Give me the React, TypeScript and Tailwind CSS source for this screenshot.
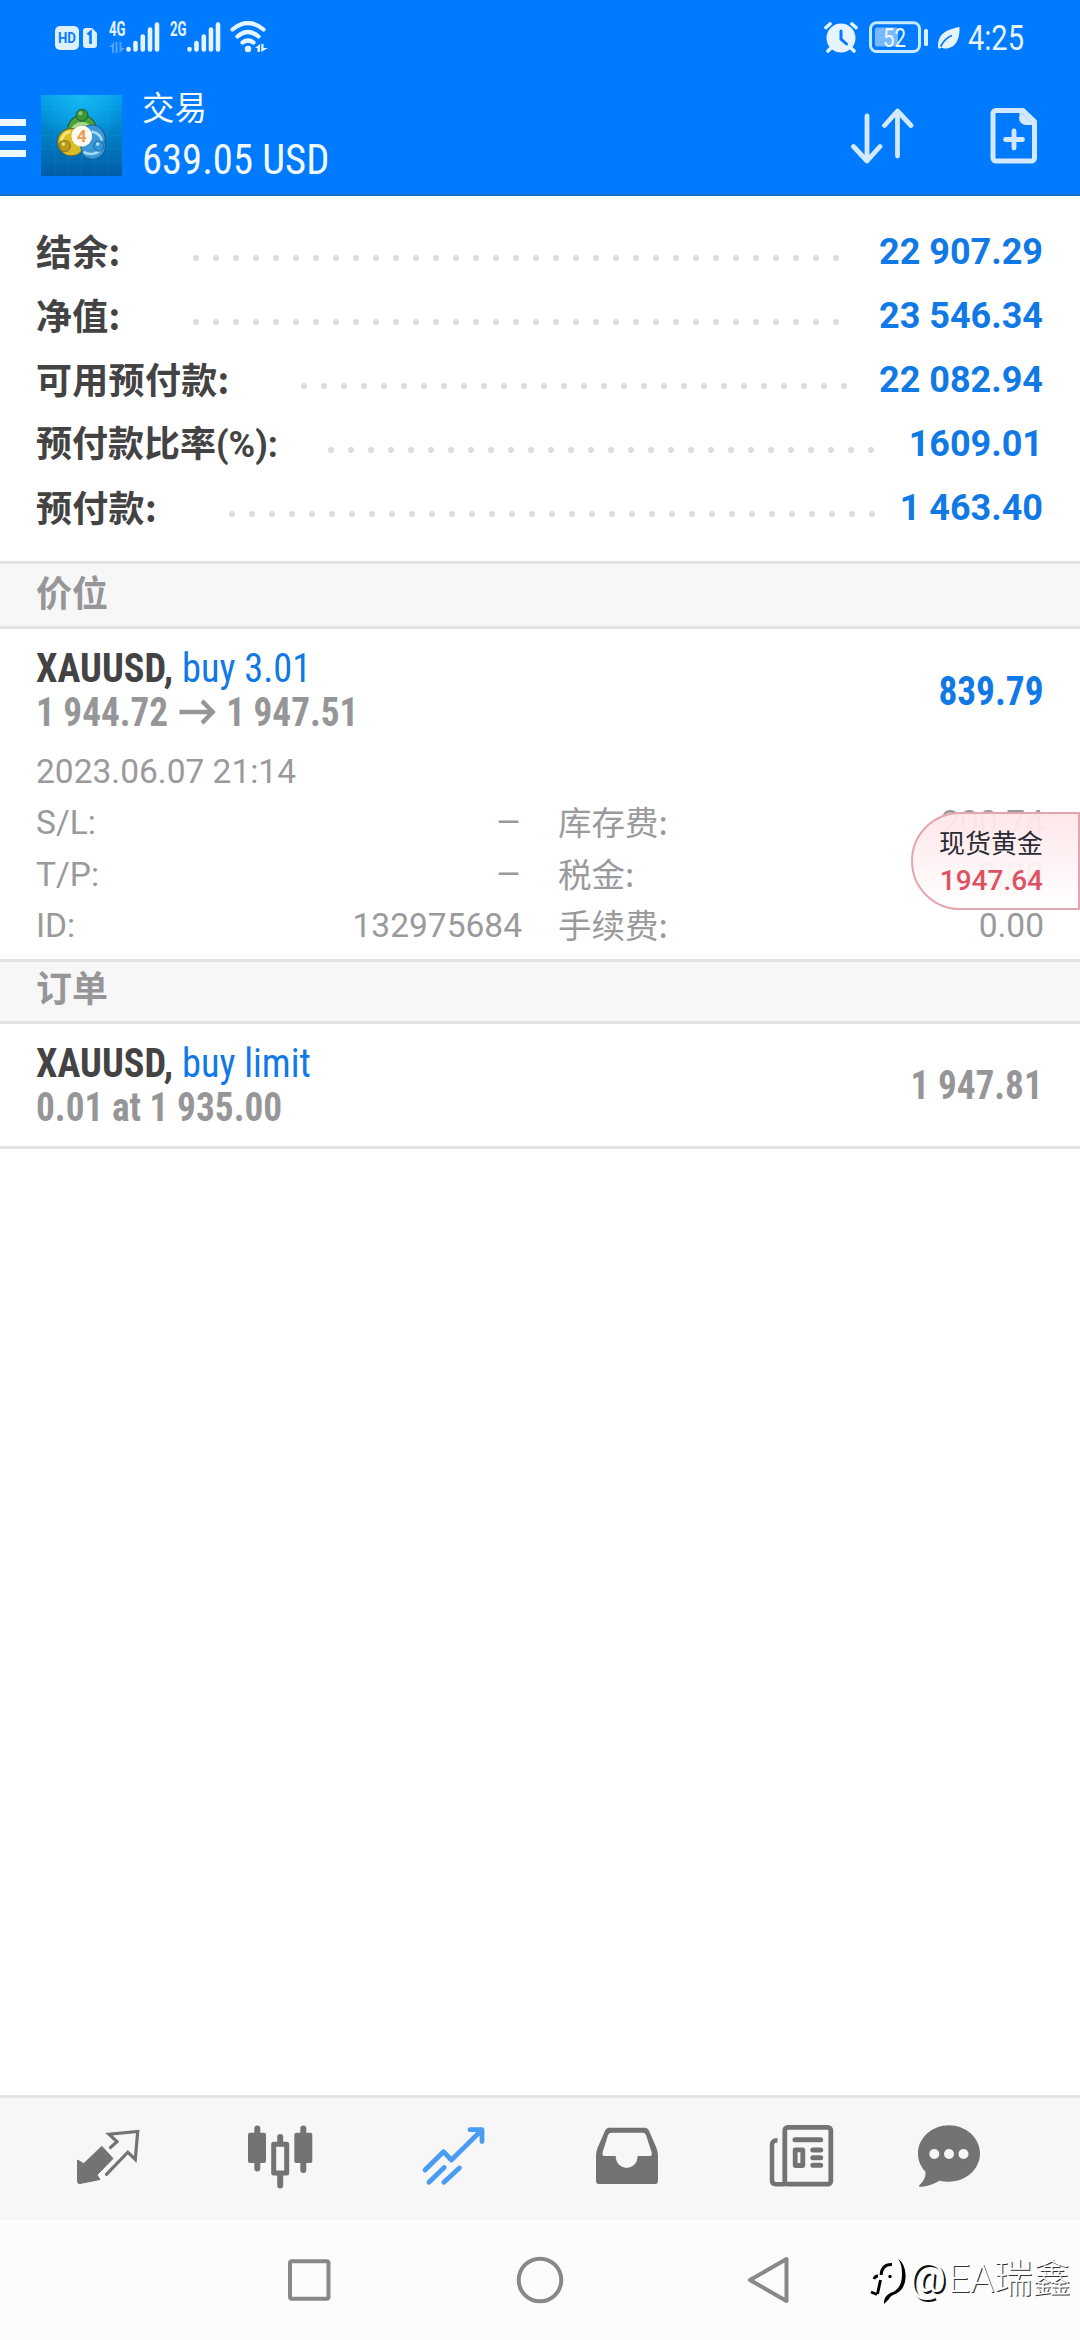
import { ReactNode } from "react";

const summaryRows = [
  { label: "结余:", value: "22 907.29", dotsClass: "w-[660px]", valueClass: "w-[197px]" },
  { label: "净值:", value: "23 546.34", dotsClass: "w-[660px]", valueClass: "w-[197px]" },
  { label: "可用预付款:", value: "22 082.94", dotsClass: "w-[560px]", valueClass: "w-[189px]" },
  { label: "预付款比率(%):", value: "1609.01", dotsClass: "w-[560px]", valueClass: "w-[162px]", latin: true },
  { label: "预付款:", value: "1 463.40", dotsClass: "w-[660px]", valueClass: "w-[161px]" },
];

const detailRows = [
  { left: "S/L:", leftValue: "–", right: "库存费:", rightValue: "-200.74" },
  { left: "T/P:", leftValue: "–", right: "税金:", rightValue: "0.00" },
  { left: "ID:", leftValue: "132975684", right: "手续费:", rightValue: "0.00" },
];

const SignalBars = () => (
  <svg className="w-[34px] h-[32px]" viewBox="0 0 34 32" stroke="#e6f4ff" strokeWidth="4.6" strokeLinecap="round">
    <path d="M2.5 28v.5M9.5 22v6.5M16.8 15.5v13M24 8.5v20M31 3.5v25" />
  </svg>
);

const StatusBar = () => (
  <div className="h-[76px] flex items-start pt-[21px] pl-[55px] pr-[57px] text-[#e6f4ff]">
    <div className="mt-[5px] w-[24px] h-[24px] rounded-[5px] bg-[#dcf0ff] text-[#0a7cff] text-[15px] leading-[25px] font-bold">
      <div className="w-[24px] text-center scale-x-[0.88]">HD</div>
    </div>
    <svg className="mt-[7px] ml-[4px] w-[14px] h-[20px]" viewBox="0 0 14 20">
      <path d="M3 0h6l5 5v12a3 3 0 0 1-3 3H3a3 3 0 0 1-3-3V3a3 3 0 0 1 3-3z" fill="#dcf0ff" />
      <path d="M4.5 6.500 7.500 4v12" fill="none" stroke="#0a7cff" strokeWidth="2.600" />
    </svg>
    <div className="ml-[12px] w-[17px] h-[32px]">
      <div className="w-[21px] text-[20px] leading-[16px] font-bold origin-left scale-x-[0.66]">4G</div>
      <svg className="mt-[5px] w-[16px] h-[11px] opacity-35" viewBox="0 0 16 11" fill="#e6f4ff">
        <path d="M5 0v11H3V5H0zM6.500 0h2v11h-2zM10.500 11V0h2v6H16z" />
      </svg>
    </div>
    <SignalBars />
    <div className="ml-[10px] w-[17px] text-[20px] leading-[16px] font-bold">
      <div className="w-[21px] origin-left scale-x-[0.66]">2G</div>
    </div>
    <SignalBars />
    <svg className="ml-[9px] w-[40px] h-[32px]" viewBox="0 0 40 32" fill="none" stroke="#e6f4ff" strokeWidth="4.200" strokeLinecap="round">
      <path d="M2.500 8.500Q18 -4.500 33.500 8.500M7.500 15.500Q18 6.500 28.500 15.500M12.500 21.500Q18 17.500 23.500 21.500" />
      <circle cx="18" cy="28" r="3.200" fill="#e6f4ff" stroke="none" />
      <path d="M30 23v8h-2.500v-4H25zM31.200 31v-8h2.300v4H38z" fill="#e6f4ff" stroke="none" />
    </svg>
    <svg className="ml-auto w-[36px] h-[32px]" viewBox="0 0 36 32" strokeLinecap="round">
      <circle cx="18" cy="17" r="14.500" fill="#e6f4ff" />
      <path d="M3 6.500 7 3M33 6.500 29 3M8 27l-3 3M28 27l3 3" stroke="#e6f4ff" strokeWidth="3.600" />
      <path d="M18 10v8l5.500 5" fill="none" stroke="#007aff" strokeWidth="3" />
    </svg>
    <svg className="ml-[10px] w-[60px] h-[32px]" viewBox="0 0 60 32">
      <rect x="1.500" y="1.800" width="49" height="28.700" rx="6" fill="none" stroke="#c4eaff" strokeWidth="3" />
      <rect x="6" y="6.500" width="23" height="19" rx="2" fill="#79b8ff" />
      <rect x="55" y="8" width="4" height="17" rx="1.500" fill="#d8f0ff" />
      <text x="14" y="25.500" fontSize="26" fontFamily="Roboto" textLength="23" lengthAdjust="spacingAndGlyphs" fill="#eef8ff">52</text>
    </svg>
    <svg className="mt-[6px] ml-[9px] w-[22px] h-[22px]" viewBox="0 0 22 22">
      <path d="M21.500 0C22 12 18 22 6 21.500L3.500 20.500 1 22 0 20C0 8 6 3 21.500 0z" fill="#e6f4ff" />
      <path d="M2.500 19.500C6 13 10 10 14 8.500" fill="none" stroke="#007aff" strokeWidth="1.800" />
    </svg>
    <div className="mt-[2px] ml-[8px] w-[55px] text-[35px] leading-[32px]">
      <div className="w-[68px] origin-left scale-x-[0.83]">4:25</div>
    </div>
  </div>
);

const AppLogo = () => (
  <svg className="w-[81px] h-[81px]" viewBox="0 0 80 80">
    <defs>
      <linearGradient id="logoBg" x1="0" y1="0" x2="0" y2="1">
        <stop offset="0" stopColor="#009be8" />
        <stop offset="0.5" stopColor="#007fc4" />
        <stop offset="1" stopColor="#005ca6" />
      </linearGradient>
      <radialGradient id="logoGlow" cx="0.5" cy="0" r="0.6">
        <stop offset="0" stopColor="#16b8f2" />
        <stop offset="1" stopColor="#16b8f2" stopOpacity="0" />
      </radialGradient>
    </defs>
    <rect width="80" height="80" fill="url(#logoBg)" />
    <rect width="80" height="80" fill="url(#logoGlow)" />
    <path d="M14 0v80M27 0v80M40 0v80M53 0v80M66 0v80M0 14h80M0 27h80M0 40h80M0 53h80M0 66h80" stroke="#4cc0f0" strokeOpacity="0.1" />
    <circle cx="40.500" cy="34" r="14" fill="#4f9f3f" stroke="#1c5a33" />
    <path d="M30 36a11 11 0 0 1 21 0" fill="none" stroke="#a6d98a" strokeWidth="3" />
    <circle cx="30" cy="46.500" r="13.500" fill="#d9bd26" stroke="#6d6a1c" />
    <path d="M20 45a11 11 0 0 1 9-9" fill="none" stroke="#f3e77c" strokeWidth="3" />
    <path d="M37 40a13 13 0 0 1 26 6 13 13 0 0 1-22 13z" fill="#3b97d6" stroke="#1a5b96" />
    <path d="M42 56a13 13 0 0 0 17-2M50 36q9 2 10 9" fill="none" stroke="#a5dbf5" strokeWidth="2.500" />
    <circle cx="40.500" cy="20" r="5.800" fill="#3f9436" stroke="#1f6b39" />
    <circle cx="39" cy="18" r="2" fill="#8fcb7b" />
    <circle cx="23.500" cy="50.500" r="5.500" fill="#b8971a" stroke="#8c7a20" />
    <circle cx="22" cy="48.500" r="1.800" fill="#f0dc70" />
    <circle cx="57" cy="50.500" r="5" fill="#3296d8" stroke="#1f6fae" />
    <circle cx="56" cy="48.500" r="1.800" fill="#a9dcf8" />
    <circle cx="40.300" cy="40.500" r="10.300" fill="#fffaf2" />
    <text x="40.300" y="46.500" textAnchor="middle" fontFamily="Roboto" fontWeight="700" fontSize="17" fill="#ee9a52">4</text>
  </svg>
);

const Header = () => (
  <div className="h-[120px] flex items-start border-b-2 border-[#1272cf] text-[#f2f9ff]">
    <div className="mt-[43px] w-[26px] flex flex-col gap-[9px]">
      <div className="h-[6.5px] bg-[#eef8ff]" />
      <div className="h-[6.5px] bg-[#eef8ff]" />
      <div className="h-[6.5px] bg-[#eef8ff]" />
    </div>
    <div className="mt-[19px] ml-[15px]">
      <AppLogo />
    </div>
    <div className="mt-[14px] ml-[20px]">
      <div className="h-[38px] text-[32.5px] leading-[38px]">交易</div>
      <div className="mt-[10px] h-[44px] text-[42px] leading-[44px] font-stretch-condensed whitespace-nowrap origin-left scale-x-[0.967]">639.05 USD</div>
    </div>
    <svg className="mt-[31px] ml-auto w-[64px] h-[58px]" viewBox="0 0 64 58" fill="none" stroke="#d4e8ff" strokeWidth="4.800" strokeLinecap="round" strokeLinejoin="round">
      <path d="M17 9v45M3.500 39.500 17 54l13-14.500M47.500 49V5M34.500 18.500 47.500 4l13.500 14.500" />
    </svg>
    <svg className="mt-[31px] ml-[76px] mr-[42px] w-[48px] h-[58px]" viewBox="0 0 48 58" strokeLinecap="round">
      <path d="M6 3.500H33L44.500 14.500V51a3 3 0 0 1-3 3H6a3 3 0 0 1-3-3V6.500a3 3 0 0 1 3-3z" fill="none" stroke="#d4e8ff" strokeWidth="5" strokeLinejoin="round" />
      <path d="M30 4l15 14h-9a7 7 0 0 1-7-7z" fill="#d4e8ff" />
      <path d="M24 24v17M15.500 32.500h17" stroke="#d4e8ff" strokeWidth="4.800" />
    </svg>
  </div>
);

const SectionTitle = ({ className, children }: { className: string; children: ReactNode }) => (
  <div className={`border-y-[3px] border-[#e2e2e2] bg-[#f7f7f7] pl-[36px] text-[36px] font-bold text-[#969698] ${className}`}>
    {children}
  </div>
);

const NavIcon = ({ children }: { children: ReactNode }) => (
  <svg className="w-[66px] h-[64px]" viewBox="0 0 66 64" fill="none" stroke="#737373" strokeLinecap="round" strokeLinejoin="round">
    {children}
  </svg>
);

const BottomNav = () => (
  <div className="h-[125px] border-t-[3px] border-[#e4e4e4] bg-[#f7f7f7] pt-[27px] pl-[76px] grid grid-cols-[172px_173px_174px_174px_148px_1fr] items-start">
    <NavIcon>
      <path d="M26 21.500 37 33.500 21 50l3 4.500L4 58.500a2 2 0 0 1-2.500-2V35l6 3.500z" fill="#737373" strokeWidth="1" />
      <path d="M34.500 22.500 41 16.700 33 9.200 61.700 6.500 59.300 34.500 51.800 27.200 30.500 49.300" strokeWidth="3.200" strokeLinejoin="miter" />
    </NavIcon>
    <NavIcon>
      <path d="M9.300 3.500v40M55.300 3.500v41.500M32.200 12v6M32.200 50v10.500" strokeWidth="6" />
      <rect x="0" y="7.700" width="18" height="30.300" rx="2" fill="#737373" stroke="none" />
      <rect x="46.300" y="7.700" width="18" height="30.300" rx="2" fill="#737373" stroke="none" />
      <rect x="25.700" y="19.300" width="13" height="28.700" strokeWidth="5" />
    </NavIcon>
    <NavIcon>
      <path d="M4 45 22.500 26.700 30.400 35 60 5.700M49 4.700H61V16.500M23.200 42.500 8 57.300M38.400 43 22.900 57.300" stroke="#4a9bf2" strokeWidth="4.800" />
    </NavIcon>
    <NavIcon>
      <path fillRule="evenodd" stroke="none" fill="#737373" d="M15 2.700H49a5 5 0 0 1 5 3L61.500 23Q63 27 63 31V56a3 3 0 0 1-3 3H4a3 3 0 0 1-3-3V31Q1 27 2.500 23L10 5.700a5 5 0 0 1 5-3zM17 7.700Q14 7.700 13 10L7.700 27Q7 31 9 31H20.800V33a10.900 11 0 0 0 21.700 0V31H55Q57.500 31 56.500 27L51 10Q50 7.700 47.500 7.700z" />
    </NavIcon>
    <NavIcon>
      <rect x="15.800" y="2.400" width="46" height="56.800" rx="3" strokeWidth="4.800" />
      <path d="M8.500 15.600Q3 15 3 20V55.200Q3 59.200 7 59.200H16" strokeWidth="4.500" strokeLinecap="butt" />
      <path d="M26 14.700H51.700M43.800 25H51.700M43.800 32.700H51.700M43.800 40.300H51.700" strokeWidth="5" />
      <rect x="26.200" y="24.800" width="7.600" height="15.700" strokeWidth="4.800" />
    </NavIcon>
    <NavIcon>
      <path d="M32 .3C49 .3 63 13 63 28.500S49 56.700 32 56.700Q27 56.700 22.400 55.800C16 59.500 9 62 3 61.700Q1 61.500 2.500 60C6 57 9 52 8.500 46.700 4 42 1 36 1 28.500 1 13 15 .3 32 .3z" fill="#737373" stroke="none" />
      <g fill="#f7f7f7" stroke="none">
        <circle cx="17.300" cy="29" r="5" />
        <circle cx="32" cy="29" r="5" />
        <circle cx="46.500" cy="29" r="5" />
      </g>
    </NavIcon>
  </div>
);

const SystemNav = () => (
  <div className="relative h-[120px] bg-[#fcfcfc] pt-[36px] pl-[285px] flex items-start">
    <svg className="w-[48px] h-[48px]" viewBox="0 0 48 48" fill="none" stroke="#888" strokeWidth="4">
      <rect x="5" y="5.200" width="38.500" height="37.500" rx="2" />
    </svg>
    <svg className="ml-[183px] w-[48px] h-[48px]" viewBox="0 0 48 48" fill="none" stroke="#888" strokeWidth="4">
      <circle cx="24" cy="24" r="21.300" />
    </svg>
    <svg className="ml-[181px] w-[48px] h-[48px]" viewBox="0 0 48 48" fill="none" stroke="#888" strokeWidth="4" strokeLinejoin="round">
      <path d="M5 24 41.500 3v42z" />
    </svg>

    {/* Watermark */}
    <div className="absolute left-[870px] top-[36px] flex items-start text-white whitespace-nowrap">
      <svg className="w-[39px] h-[50px]" viewBox="0 0 39 50">
        <path d="M28 5Q35 10 34 22 33 34 20 39" fill="none" stroke="#fff" strokeWidth="5" />
        <path d="M28 3C37 8 38 27 31 34 27 38.500 21 38.500 19 43L14 48C13.500 41 18 37.500 23 36 30 32.500 32 26 32 18 32 11 31 7 28 3z" fill="#000" />
        <path d="M22 8.500Q12 8 11 19M4 23q1-3 4-3M10.500 24 7.500 38M7 38.500 1 36" fill="none" stroke="#000" strokeWidth="2.900" />
        <circle cx="20" cy="20.500" r="1.700" />
      </svg>
      <span className="w-[38px] text-[41px] leading-[50px] -mt-[3px] [text-shadow:2px_2px_0_#111]">@</span>
      <span className="ml-[1px] -mt-[1px] text-[38.500px] leading-[48px] font-light [text-shadow:1px_1px_0_#333]">EA瑞鑫</span>
    </div>
  </div>
);

export default function App() {
  return (
    <div className="relative w-[1080px] h-[2340px] flex flex-col overflow-hidden bg-white font-[Roboto,'Noto_Sans_CJK_SC',sans-serif]">
      <div className="bg-[#007aff]">
        <StatusBar />
        <Header />
      </div>

      {/* Account summary */}
      <div className="h-[365px] pt-[23px] pl-[36px] pr-[37px]">
        {summaryRows.map((row) => (
          <div key={row.label} className="h-[64px] flex items-center text-[36px] leading-[64px] font-bold whitespace-nowrap">
            <div className={`flex-1 text-[#434343] ${row.latin ? "pt-[3px]" : "pb-[3px] tracking-[0.3px] font-['Noto_Sans_CJK_SC',sans-serif]"}`}>{row.label}</div>
            <div className={`mt-[13px] h-[20px] bg-[radial-gradient(circle,#dedede_2.800px,transparent_3.300px)] bg-[length:20px_20px] ${row.dotsClass}`} />
            <div className={`pt-[1px] text-right text-[#1079e5] ${row.valueClass}`}>{row.value}</div>
          </div>
        ))}
      </div>

      {/* Positions */}
      <SectionTitle className="h-[68px] leading-[62px]">价位</SectionTitle>
      <div className="h-[330px] pt-[17px] pl-[36px] pr-[36px]">
        <div className="flex items-center justify-between">
          <div className="text-[41px] leading-[44px] font-stretch-condensed whitespace-nowrap">
            <div className="origin-left scale-x-[0.935]">
              <span className="font-bold text-[#434343]">XAUUSD,</span> <span className="text-[#1079e5]">buy 3.01</span>
            </div>
            <div className="flex items-center font-bold text-[#969698] origin-left scale-x-[0.907]">
              1 944.72
              <svg className="mx-[12px] w-[40px] h-[26px]" viewBox="0 0 40 26" fill="none" stroke="#969698" strokeWidth="4.500">
                <path d="M0 13h37M25 2l12 11-12 11" />
              </svg>
              1 947.51
            </div>
          </div>
          <div className="pt-[2px] text-[41px] leading-[44px] font-bold font-stretch-condensed text-[#1079e5] origin-right scale-x-[0.91]">839.79</div>
        </div>
        <div className="mt-[11.5px] text-[33.5px] leading-[51.5px] text-[#9a9a9c]">
          <div>2023.06.07 21:14</div>
          {detailRows.map((row) => (
            <div key={row.left} className="h-[51.5px] grid grid-cols-[486px_1fr] gap-[36px]">
              <div className="flex justify-between">
                <span>{row.left}</span>
                <span className={row.leftValue === "–" ? "origin-right scale-x-120" : ""}>{row.leftValue}</span>
              </div>
              <div className="flex justify-between">
                <span className="-mt-[2px] font-['Noto_Sans_CJK_SC',sans-serif]">{row.right}</span>
                <span>{row.rightValue}</span>
              </div>
            </div>
          ))}
        </div>
      </div>

      {/* Orders */}
      <SectionTitle className="h-[65px] leading-[57px]">订单</SectionTitle>
      <div className="h-[125px] pt-[17px] pl-[36px] pr-[37px] border-b-[3px] border-[#e2e2e2] flex justify-between items-start">
        <div className="text-[41px] leading-[44px] font-stretch-condensed whitespace-nowrap">
          <div className="origin-left scale-x-[0.935]">
            <span className="font-bold text-[#434343]">XAUUSD,</span> <span className="text-[#1079e5]">buy limit</span>
          </div>
          <div className="font-bold text-[#969698] origin-left scale-x-[0.91]">0.01 at 1 935.00</div>
        </div>
        <div className="text-[41px] leading-[88px] font-bold font-stretch-condensed text-[#969698] origin-right scale-x-[0.907]">1 947.81</div>
      </div>

      <div className="flex-1" />
      <BottomNav />
      <SystemNav />

      {/* Floating quote */}
      <div className="absolute right-0 top-[812px] w-[169px] h-[98px] rounded-l-[49px] border-2 border-[#e5a5ae] bg-linear-to-b from-[#ffe6e9]/95 to-white/95 pr-[35px] pt-[13px] text-right whitespace-nowrap">
        <div className="text-[26px] leading-[34px] text-[#2b2b33]">现货黄金</div>
        <div className="mt-[3px] text-[28px] leading-[34px] font-medium text-[#dd5263]">1947.64</div>
      </div>
    </div>
  );
}
